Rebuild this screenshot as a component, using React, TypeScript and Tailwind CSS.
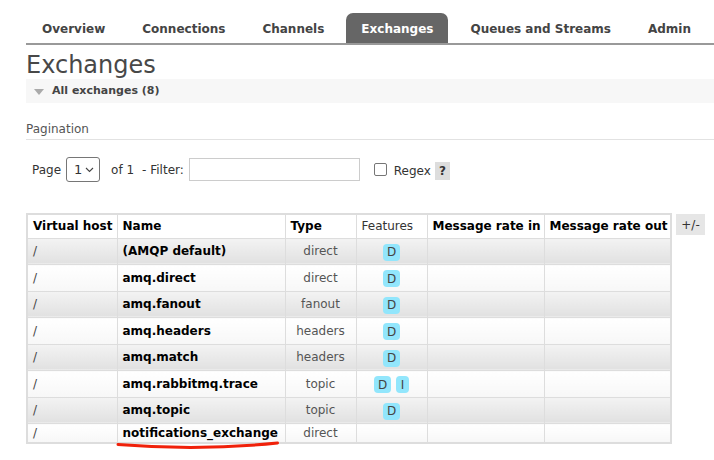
import React from 'react';

type Row = {
  vhost: string;
  name: string;
  type: string;
  features: string[];
};

const tabs = ['Overview', 'Connections', 'Channels', 'Exchanges', 'Queues and Streams', 'Admin'];

const rows: Row[] = [
  { vhost: '/', name: '(AMQP default)', type: 'direct', features: ['D'] },
  { vhost: '/', name: 'amq.direct', type: 'direct', features: ['D'] },
  { vhost: '/', name: 'amq.fanout', type: 'fanout', features: ['D'] },
  { vhost: '/', name: 'amq.headers', type: 'headers', features: ['D'] },
  { vhost: '/', name: 'amq.match', type: 'headers', features: ['D'] },
  { vhost: '/', name: 'amq.rabbitmq.trace', type: 'topic', features: ['D', 'I'] },
  { vhost: '/', name: 'amq.topic', type: 'topic', features: ['D'] },
  { vhost: '/', name: 'notifications_exchange', type: 'direct', features: [] },
];

function Badge({ label }: { label: string }) {
  return (
    <span
      className={`inline-flex h-[17px] items-center justify-center rounded-[4px] bg-[#92e6fc] text-[12px] leading-none text-[#444] ${
        label === 'I' ? 'w-[13px]' : 'w-[17px]'
      }`}
    >
      {label}
    </span>
  );
}

export default function App() {
  return (
    <div className="relative h-[460px] w-[714px] overflow-hidden bg-white font-['DejaVu_Sans',sans-serif] text-[12px] text-[#484848]">
      {/* main nav */}
      <nav className="ml-[26px] mt-[13px] flex h-[32px] items-end gap-[7px] border-b-2 border-[#999] pl-[1px]">
        {tabs.map((t) => (
          <div
            key={t}
            className={`flex h-[30px] items-center px-[15px] pt-[2px] text-[12px] font-bold ${
              t === 'Exchanges' ? 'rounded-t-[7px] bg-[#666] text-white' : 'text-[#444]'
            }`}
          >
            {t}
          </div>
        ))}
      </nav>

      <div className="ml-[26px]">
        <h1 className="mt-[6px] h-[28px] text-[24px] leading-[28px] text-[#484848]">Exchanges</h1>

        <div className="flex h-[24px] items-center gap-[8px] bg-[#f7f7f7] pl-[8px]">
          <svg width="10" height="6" viewBox="0 0 10 6" className="mt-[1px]">
            <path d="M0 0 L10 0 L5 6 Z" fill="#aaa" />
          </svg>
          <span className="text-[11px] font-bold text-[#444]">All exchanges (8)</span>
        </div>

        <div className="mt-[19px] border-b border-[#e2e2e2] pb-[2px] text-[12px] leading-[15px] text-[#555]">
          Pagination
        </div>

        {/* pagination controls */}
        <div className="ml-[6px] mt-[17px] flex h-[25px] items-center text-[12px] text-[#333]">
          <span>Page</span>
          <div className="ml-[5px] flex h-[25px] w-[34px] items-center justify-between rounded-[3px] border border-[#767676] bg-white pl-[7px] pr-[5px]">
            <span className="text-[13px]">1</span>
            <svg width="9" height="6" viewBox="0 0 9 6">
              <path d="M1 1 L4.5 4.5 L8 1" fill="none" stroke="#444" strokeWidth="1.1" />
            </svg>
          </div>
          <span className="ml-[11px]">of 1</span>
          <span className="ml-[8px]">- Filter:</span>
          <div className="ml-[5px] h-[23px] w-[171px] border border-[#ccc] bg-white" />
          <div className="ml-[14px] h-[13px] w-[13px] rounded-[2px] border border-[#767676] bg-white" />
          <span className="ml-[7px] mt-[2px]">Regex</span>
          <span className="ml-[4px] mt-[3px] flex h-[18px] w-[15px] items-center justify-center bg-[#ddd] font-bold text-[#333]">
            ?
          </span>
        </div>

        {/* exchanges table */}
        <div className="mt-[31px] flex items-start gap-[4px]">
          <table className="w-[644px] table-fixed border-collapse border-2 border-[#ddd] text-[12px]">
            <colgroup>
              <col className="w-[90px]" />
              <col className="w-[168px]" />
              <col className="w-[71px]" />
              <col className="w-[71px]" />
              <col className="w-[117px]" />
              <col className="w-[127px]" />
            </colgroup>
            <thead>
              <tr className="bg-white text-left text-black">
                <th className="h-[24px] whitespace-nowrap border border-[#ddd] px-[5px] font-bold">Virtual host</th>
                <th className="h-[24px] whitespace-nowrap border border-[#ddd] px-[5px] font-bold">Name</th>
                <th className="h-[24px] whitespace-nowrap border border-[#ddd] px-[5px] font-bold">Type</th>
                <th className="h-[24px] whitespace-nowrap border border-[#ddd] px-[5px] font-normal text-[#333]">Features</th>
                <th className="h-[24px] whitespace-nowrap border border-[#ddd] px-[5px] font-bold">Message rate in</th>
                <th className="h-[24px] whitespace-nowrap border border-[#ddd] px-[5px] font-bold">Message rate out</th>
              </tr>
            </thead>
            <tbody>
              {rows.map((r, i) => {
                const bg =
                  i % 2 === 0
                    ? 'bg-linear-to-b from-[#f3f3f3] to-[#e1e1e1]'
                    : 'bg-linear-to-b from-white to-[#f7f7f7]';
                const h = r.features.length ? 'h-[26.5px]' : 'h-[19px]';
                const cell = `whitespace-nowrap border border-[#ddd] px-[5px] ${bg} ${h}`;
                return (
                  <tr key={r.name}>
                    <td className={`${cell} text-[#444]`}>{r.vhost}</td>
                    <td className={`${cell} font-bold text-black`}>{r.name}</td>
                    <td className={`${cell} text-center text-[#555]`}>{r.type}</td>
                    <td className={`${cell} text-center`}>
                      <div className="flex items-center justify-center gap-[5px] pt-[2px]">
                        {r.features.map((f) => (
                          <Badge key={f} label={f} />
                        ))}
                      </div>
                    </td>
                    <td className={cell} />
                    <td className={cell} />
                  </tr>
                );
              })}
            </tbody>
          </table>
          <span className="mt-[1px] flex h-[21px] w-[29px] items-center justify-center bg-[#e6e6e6] text-[12px] text-[#333]">
            +/-
          </span>
        </div>
      </div>

      {/* red annotation underline */}
      <svg className="absolute left-0 top-0" width="714" height="460" viewBox="0 0 714 460">
        <path d="M118 444.5 Q 200 451 277.5 443" fill="none" stroke="#f0210a" strokeWidth="3" strokeLinecap="round" />
      </svg>
    </div>
  );
}
